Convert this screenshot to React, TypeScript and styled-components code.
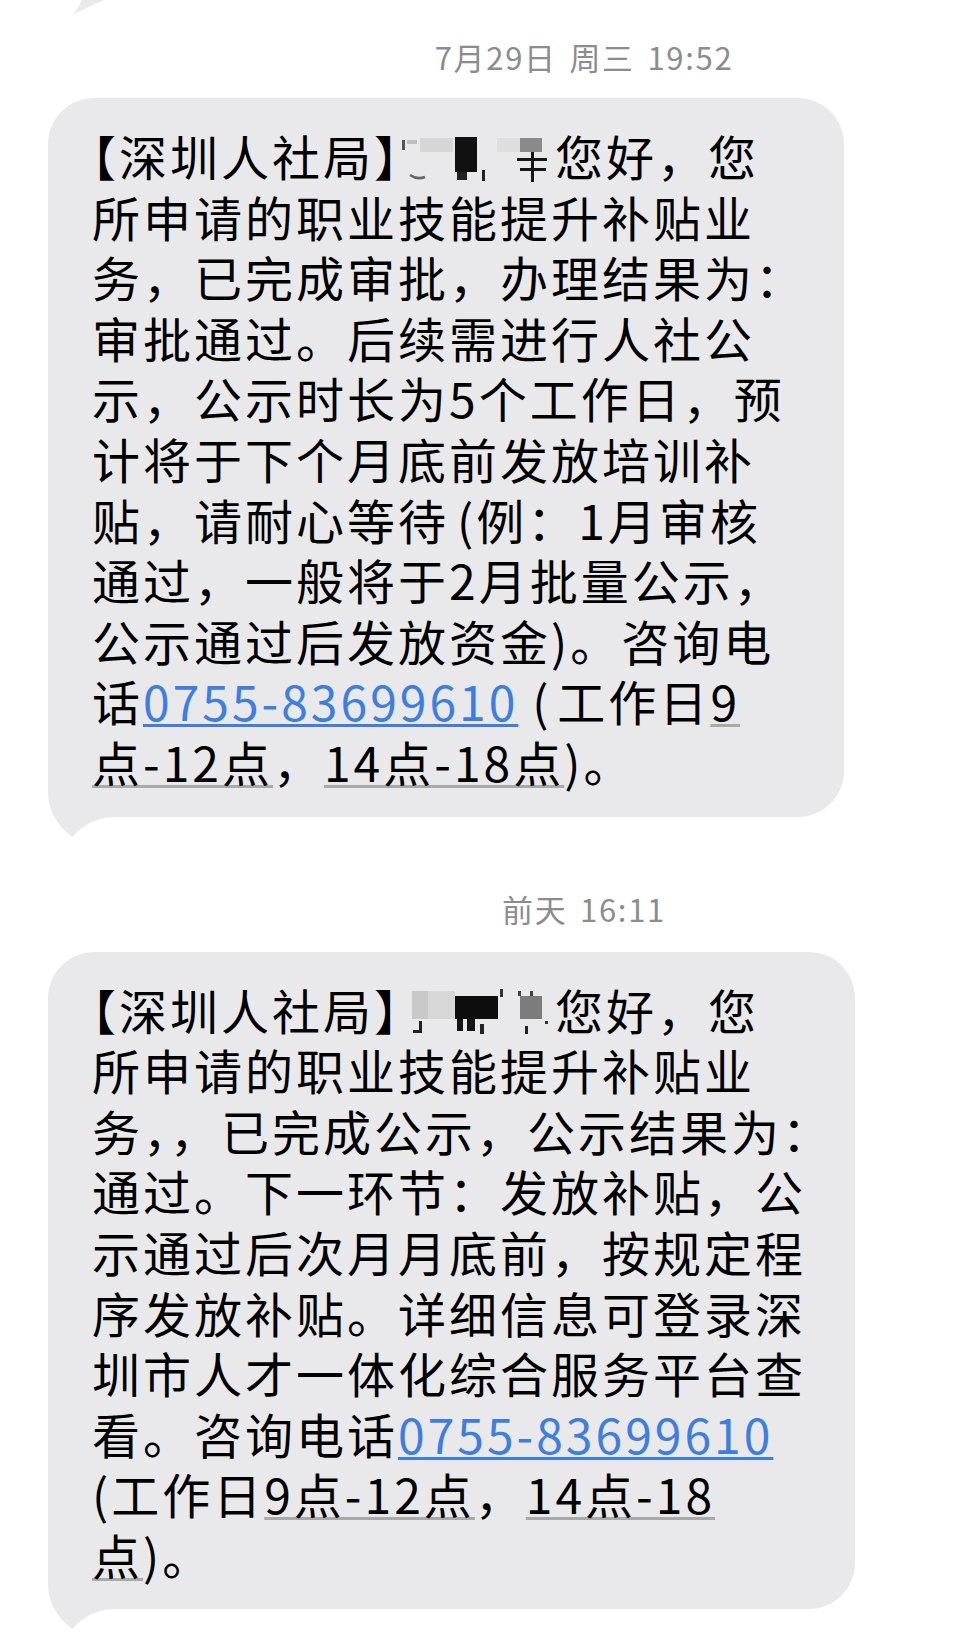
import React from "react";
import styled, { createGlobalStyle } from "styled-components";

const Global = createGlobalStyle`
  html, body { margin: 0; padding: 0; background: #ffffff; }
  body { font-family: "Noto Sans CJK SC", "Noto Sans", sans-serif; }
`;

const Page = styled.div`
  width: 960px;
  min-height: 1637px;
  display: flex;
  flex-direction: column;
  align-items: flex-start;
  overflow: hidden;
`;

const PrevStub = styled.svg`
  display: block;
  width: 960px;
  height: 16px;
`;

const TimeRow = styled.div<{ $top: number }>`
  width: 960px;
  box-sizing: border-box;
  padding-left: 208px;
  margin-top: ${(p) => p.$top}px;
  display: flex;
  justify-content: center;
  font-size: 31px;
  line-height: 40px;
  letter-spacing: 1.7px;
  word-spacing: 4px;
  color: #8c8c8e;
  white-space: nowrap;
`;

const Bubble = styled.div<{ $w: number; $top: number }>`
  position: relative;
  margin-top: ${(p) => p.$top}px;
  margin-left: 48px;
  width: ${(p) => p.$w}px;
  box-sizing: border-box;
  padding: 27px 0 25px 44px;
  background: #e9e9eb;
  border-radius: 46px;
  color: #000;
  font-size: 48px;
  line-height: 60.6px;
  letter-spacing: 3px;
`;

const Line = styled.div`
  position: relative;
  z-index: 1;
  white-space: nowrap;
`;

const Bracket = styled.span`
  font-feature-settings: "halt" 1;
`;

const Paren = styled.span<{ $before?: number; $after?: number }>`
  margin-left: ${(p) => p.$before ?? 0}px;
  margin-right: ${(p) => p.$after ?? 0}px;
`;

const Link = styled.span`
  color: #3d7ee0;
  text-decoration: underline;
  text-decoration-color: #3d7ee0;
  text-decoration-thickness: 3px;
  text-underline-offset: 3px;
`;

const Detect = styled.span`
  text-decoration: underline;
  text-decoration-color: #a9a9a9;
  text-decoration-thickness: 3px;
  text-underline-offset: 3px;
`;

const TailSvg = styled.svg`
  position: absolute;
  left: 0;
  bottom: -22px;
  width: 70px;
  height: 102px;
  z-index: 0;
`;

const BlurSvg = styled.svg`
  display: inline-block;
  width: 154px;
  height: 48px;
  vertical-align: -6px;
`;

const Tail: React.FC = () => (
  <TailSvg viewBox="0 -80 70 102">
    <path
      d="M0,-80 L0,-24 C0,-6 11,11 25,20 C29,15 40,2 64,0 L64,-80 Z"
      fill="#e9e9eb"
    />
  </TailSvg>
);

const Blur1: React.FC = () => (
  <BlurSvg viewBox="0 0 154 48">
    <rect x="1" y="6" width="3" height="10" fill="#555" />
    <rect x="6" y="6" width="10" height="4" fill="#bdbdbd" />
    <rect x="19" y="4" width="33" height="14" fill="#d6d6d6" />
    <path d="M9,41 Q16,46 24,43" stroke="#666" strokeWidth="2.5" fill="none" />
    <rect x="54" y="3" width="22" height="35" fill="#111" />
    <rect x="56" y="38" width="10" height="8" fill="#222" />
    <rect x="81" y="36" width="3" height="11" fill="#222" />
    <rect x="96" y="4" width="23" height="14" fill="#dedede" />
    <rect x="119" y="4" width="22" height="14" fill="#8a8a8a" />
    <rect x="116" y="24" width="30" height="3" fill="#151515" />
    <rect x="119" y="34" width="26" height="3" fill="#151515" />
    <rect x="130" y="18" width="3" height="30" fill="#151515" />
  </BlurSvg>
);

const Blur2: React.FC = () => (
  <BlurSvg viewBox="0 0 154 48">
    <rect x="11" y="3" width="16" height="28" fill="#c9c9c9" />
    <rect x="27" y="3" width="27" height="28" fill="#d7d7d7" />
    <rect x="18" y="33" width="3" height="12" fill="#222" />
    <rect x="12" y="42" width="8" height="3" fill="#222" />
    <rect x="54" y="8" width="43" height="23" fill="#0d0d0d" />
    <rect x="56" y="31" width="6" height="12" fill="#151515" />
    <rect x="66" y="31" width="8" height="12" fill="#151515" />
    <rect x="79" y="36" width="4" height="10" fill="#222" />
    <rect x="99" y="1" width="3" height="8" fill="#333" />
    <rect x="117" y="3" width="3" height="5" fill="#444" />
    <rect x="129" y="3" width="3" height="5" fill="#444" />
    <rect x="119" y="8" width="22" height="23" fill="#7c7c7c" />
    <rect x="124" y="38" width="3" height="8" fill="#222" />
    <rect x="144" y="33" width="3" height="3" fill="#333" />
  </BlurSvg>
);

export default function App() {
  return (
    <Page>
      <Global />
      <PrevStub viewBox="0 0 960 16">
        <path d="M73,15 C77,9 80,4 82,0 L104,0 C93,5 81,10 73,15 Z" fill="#e9e9eb" />
      </PrevStub>

      <TimeRow $top={21}>7月29日 周三 19:52</TimeRow>

      <Bubble $w={796} $top={21}>
        <Line>
          <Bracket>【</Bracket>深圳人社局<Bracket>】</Bracket>
          <Blur1 />
          您好，您
        </Line>
        <Line>所申请的职业技能提升补贴业</Line>
        <Line>务，已完成审批，办理结果为：</Line>
        <Line>审批通过。后续需进行人社公</Line>
        <Line>示，公示时长为5个工作日，预</Line>
        <Line>计将于下个月底前发放培训补</Line>
        <Line>
          贴，请耐心等待<Paren $before={8}>(</Paren>例：1月审核
        </Line>
        <Line>通过，一般将于2月批量公示，</Line>
        <Line>公示通过后发放资金)。咨询电</Line>
        <Line>
          话<Link>0755-83699610</Link> <Paren $after={6}>(</Paren>工作日
          <Detect>9</Detect>
        </Line>
        <Line>
          <Detect>点-12点</Detect>，<Detect>14点-18点</Detect>)。
        </Line>
        <Tail />
      </Bubble>

      <TimeRow $top={72}>前天 16:11</TimeRow>

      <Bubble $w={807} $top={23}>
        <Line>
          <Bracket>【</Bracket>深圳人社局<Bracket>】</Bracket>
          <Blur2 />
          您好，您
        </Line>
        <Line>所申请的职业技能提升补贴业</Line>
        <Line>务，，已完成公示，公示结果为：</Line>
        <Line>通过。下一环节：发放补贴，公</Line>
        <Line>示通过后次月月底前，按规定程</Line>
        <Line>序发放补贴。详细信息可登录深</Line>
        <Line>圳市人才一体化综合服务平台查</Line>
        <Line>
          看。咨询电话<Link>0755-83699610</Link>
        </Line>
        <Line>
          (工作日<Detect>9点-12点</Detect>，<Detect>14点-18</Detect>
        </Line>
        <Line>
          <Detect>点</Detect>)。
        </Line>
        <Tail />
      </Bubble>
    </Page>
  );
}
